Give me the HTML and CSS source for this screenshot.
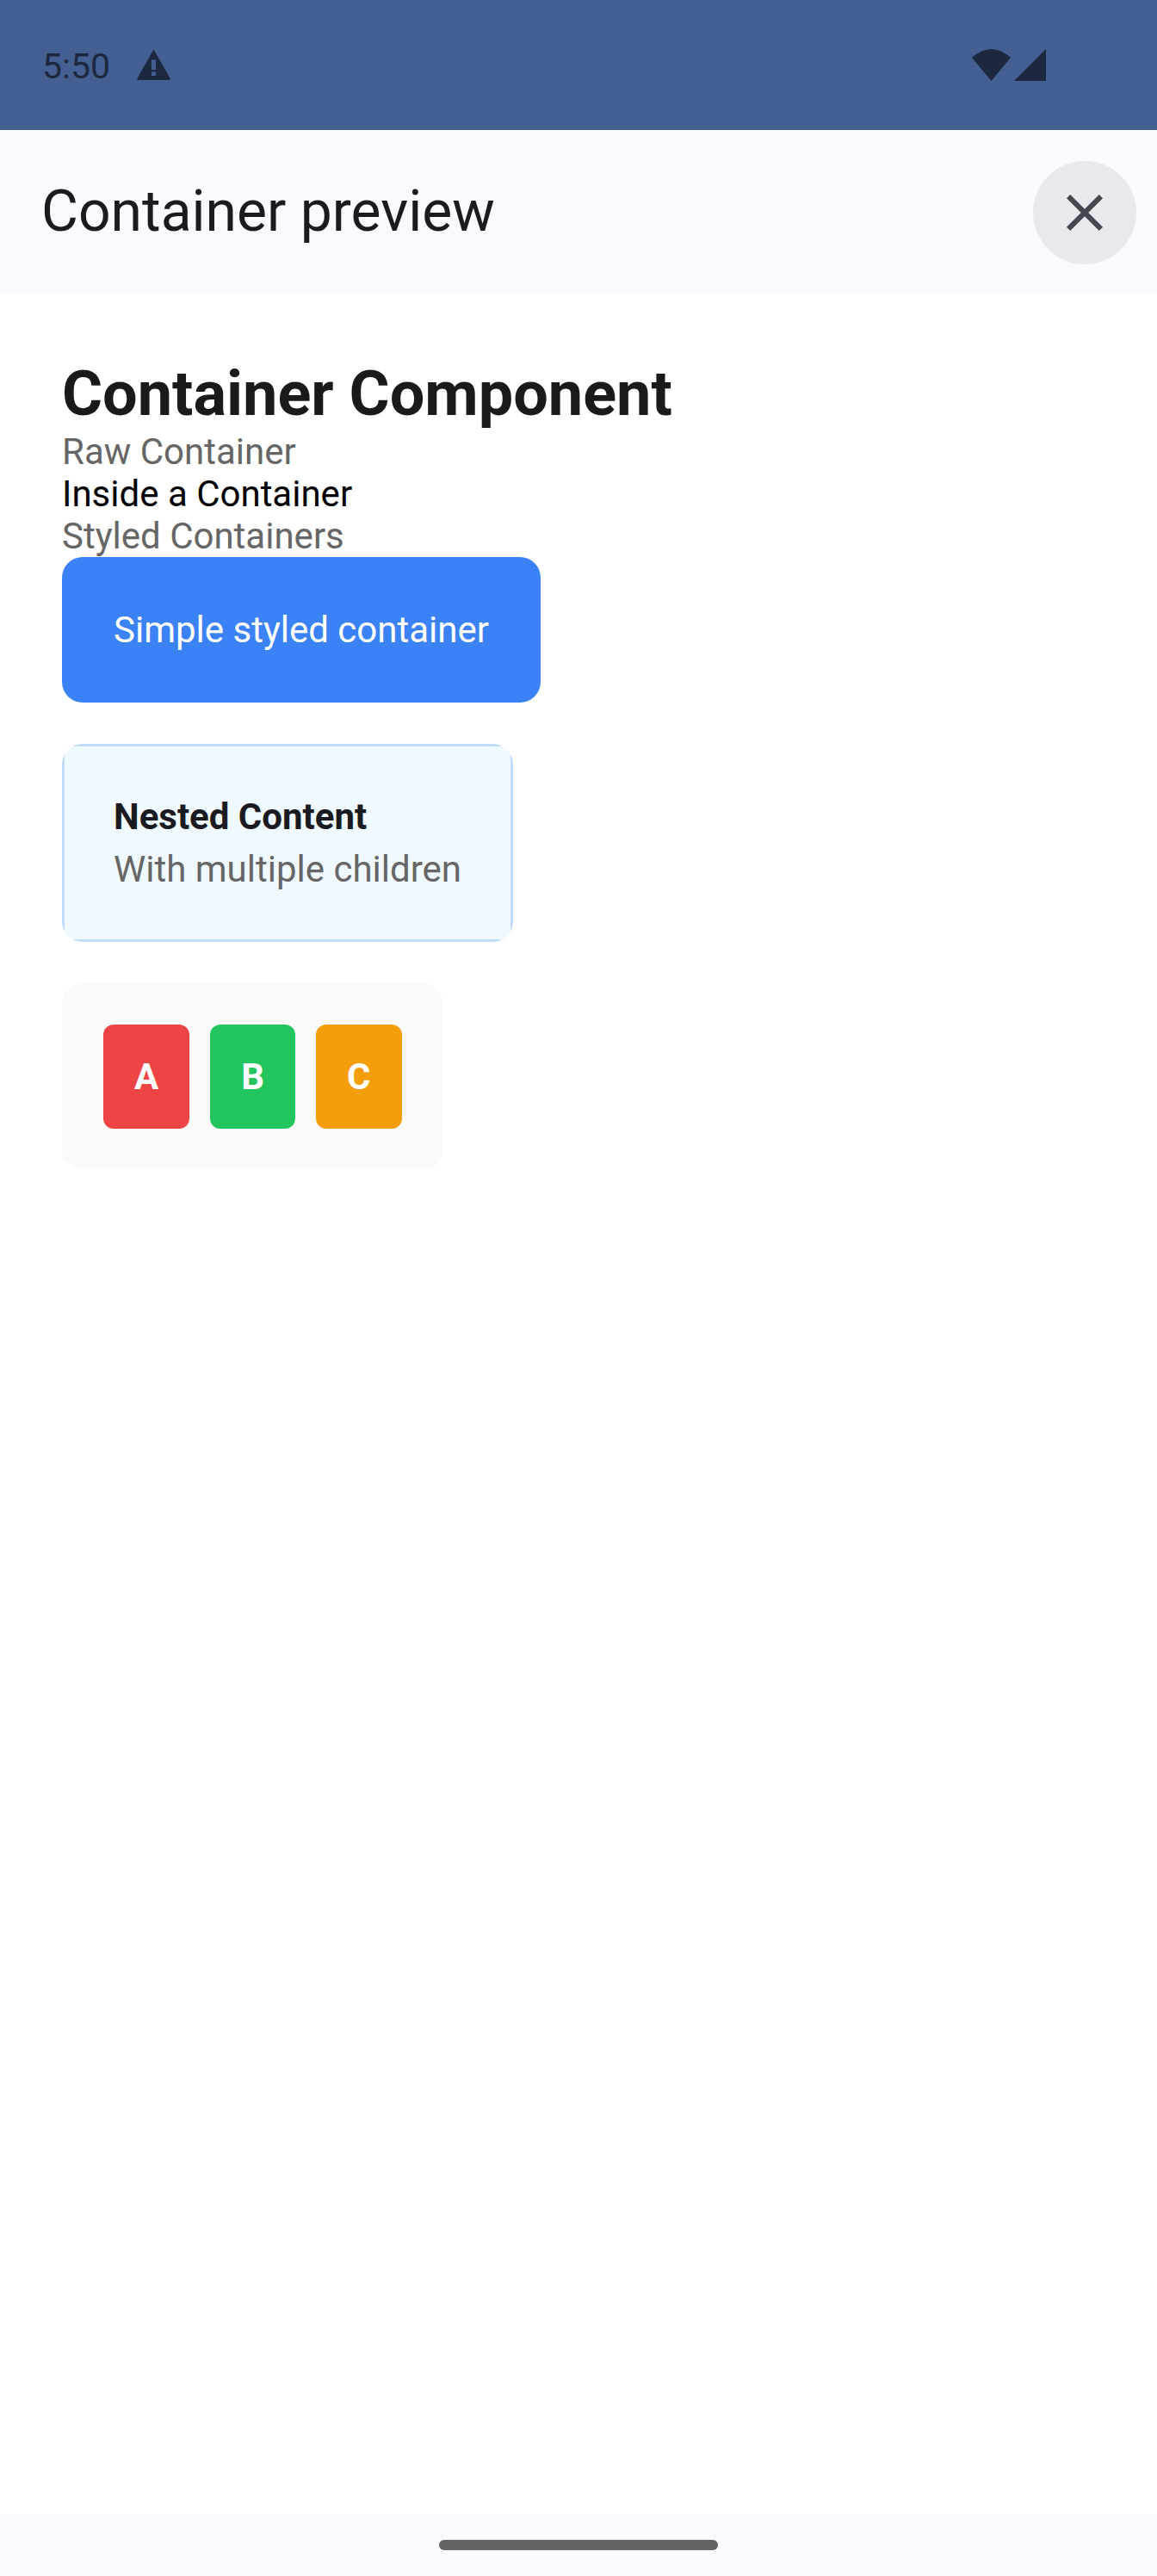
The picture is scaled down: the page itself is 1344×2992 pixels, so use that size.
FILE: index.html
```html
<!DOCTYPE html>
<html lang="en">
<head>
  <meta charset="UTF-8" />
  <meta name="viewport" content="width=device-width, initial-scale=1.0">
  <title>Container preview</title>
  <link rel="stylesheet" href="styles.css">
</head>
<body>
<div class="screen">
  <div class="status-bar">
    <span class="clock">5:50</span>
    <svg class="alert-icon" viewBox="0 0 39 36" width="39" height="36">
      <path d="M19.5 0.5 L38.6 34 Q39 36 37.5 36 L1.5 36 Q0 36 0.4 34 Z M17 12.5 L17 24 L22 24 L22 12.5 Z M17 26.5 L17 31 L22 31 L22 26.5 Z" fill="#1b2840" fill-rule="evenodd"/>
    </svg>
    <div class="status-right">
      <svg viewBox="0 0 45 37" width="45" height="37">
        <path d="M0 10 Q22.5 -10 45 10 L22.5 37 Z" fill="#1b2840"/>
      </svg>
      <svg viewBox="0 0 37 37" width="37" height="37">
        <path d="M37 0 L37 37 L0 37 Z" fill="#1b2840"/>
      </svg>
    </div>
  </div>

  <div class="app-bar">
    <span class="app-title">Container preview</span>
    <button class="close-btn" type="button">
      <svg viewBox="0 0 24 24" width="72" height="72">
        <path d="M19 6.41L17.59 5 12 10.59 6.41 5 5 6.41 10.59 12 5 17.59 6.41 19 12 13.41 17.59 19 19 17.59 13.41 12z" fill="#44474f"/>
      </svg>
    </button>
  </div>

  <div class="content">
    <h1 class="heading">Container Component</h1>
    <p class="label">Raw Container</p>
    <p class="plain">Inside a Container</p>
    <p class="label">Styled Containers</p>

    <div class="box box-blue">Simple styled container</div>

    <div class="box box-nested">
      <p class="nested-title">Nested Content</p>
      <p class="nested-sub">With multiple children</p>
    </div>

    <div class="box-row">
      <div class="tile tile-red">A</div>
      <div class="tile tile-green">B</div>
      <div class="tile tile-amber">C</div>
    </div>
  </div>

  <div class="nav-bar"><div class="nav-pill"></div></div>
</div>
</body>
</html>
```

FILE: styles.css
```css
* {
  box-sizing: border-box;
}
body {
  margin: 0;
  font-family: 'Roboto', sans-serif;
  background: #fff;
}
p, h1 {
  margin: 0;
}
.screen {
  display: flex;
  flex-direction: column;
  height: 2992px;
}
.status-bar {
  display: flex;
  align-items: flex-start;
  height: 151px;
  padding: 57px 129px 0 48px;
  background: #445f92;
  flex-shrink: 0;
}
.clock {
  font-size: 41px;
  line-height: 41px;
  color: #1b2840;
  margin-left: 1px;
}
.alert-icon {
  margin-left: 31px;
}
.status-right {
  display: flex;
  gap: 4px;
  margin-left: auto;
}
.app-bar {
  display: flex;
  align-items: center;
  justify-content: space-between;
  height: 192px;
  padding: 0 24px 0 48px;
  background: #f9f9ff;
  flex-shrink: 0;
}
.app-title {
  font-size: 66px;
  color: #1a1b20;
  margin-bottom: 3px;
}
.close-btn {
  display: flex;
  align-items: center;
  justify-content: center;
  width: 120px;
  height: 120px;
  padding: 0;
  border: none;
  border-radius: 50%;
  background: #e8e8ed;
}
.content {
  flex: 1;
  padding: 72px;
}
.heading {
  font-size: 72px;
  font-weight: 700;
  color: #1a1a1a;
}
.label {
  font-size: 42px;
  color: #666;
}
.plain {
  font-size: 42px;
  color: #000;
}
.box {
  width: fit-content;
  border-radius: 24px;
  margin-bottom: 48px;
}
.box-blue {
  padding: 60px;
  background: #3b82f6;
  color: #fff;
  font-size: 42px;
}
/* the border only shows on the straight sides, the corners stay bare */
.box-nested {
  padding: 60px;
  background:
    linear-gradient(#bfdbfe, #bfdbfe) top / 100% 3px no-repeat,
    linear-gradient(#bfdbfe, #bfdbfe) bottom / 100% 3px no-repeat,
    linear-gradient(#bfdbfe, #bfdbfe) left / 3px 100% no-repeat,
    linear-gradient(#bfdbfe, #bfdbfe) right / 3px 100% no-repeat,
    #f0f9ff;
}
.nested-title {
  font-size: 42px;
  font-weight: 700;
  color: #1a1b20;
  margin-bottom: 12px;
}
.nested-sub {
  font-size: 42px;
  color: #666;
}
.box-row {
  display: flex;
  gap: 24px;
  width: fit-content;
  padding: 48px;
  border-radius: 24px;
  background: #fafafa;
}
.tile {
  padding: 36px;
  border-radius: 12px;
  color: #fff;
  font-size: 42px;
  font-weight: 700;
}
.tile-red { background: #ef4444; }
.tile-green { background: #22c55e; }
.tile-amber { background: #f59e0b; }
.nav-bar {
  display: flex;
  justify-content: center;
  height: 72px;
  padding-top: 30px;
  background: #f9f9ff;
  flex-shrink: 0;
}
.nav-pill {
  width: 324px;
  height: 12px;
  border-radius: 6px;
  background: #636363;
}
```
